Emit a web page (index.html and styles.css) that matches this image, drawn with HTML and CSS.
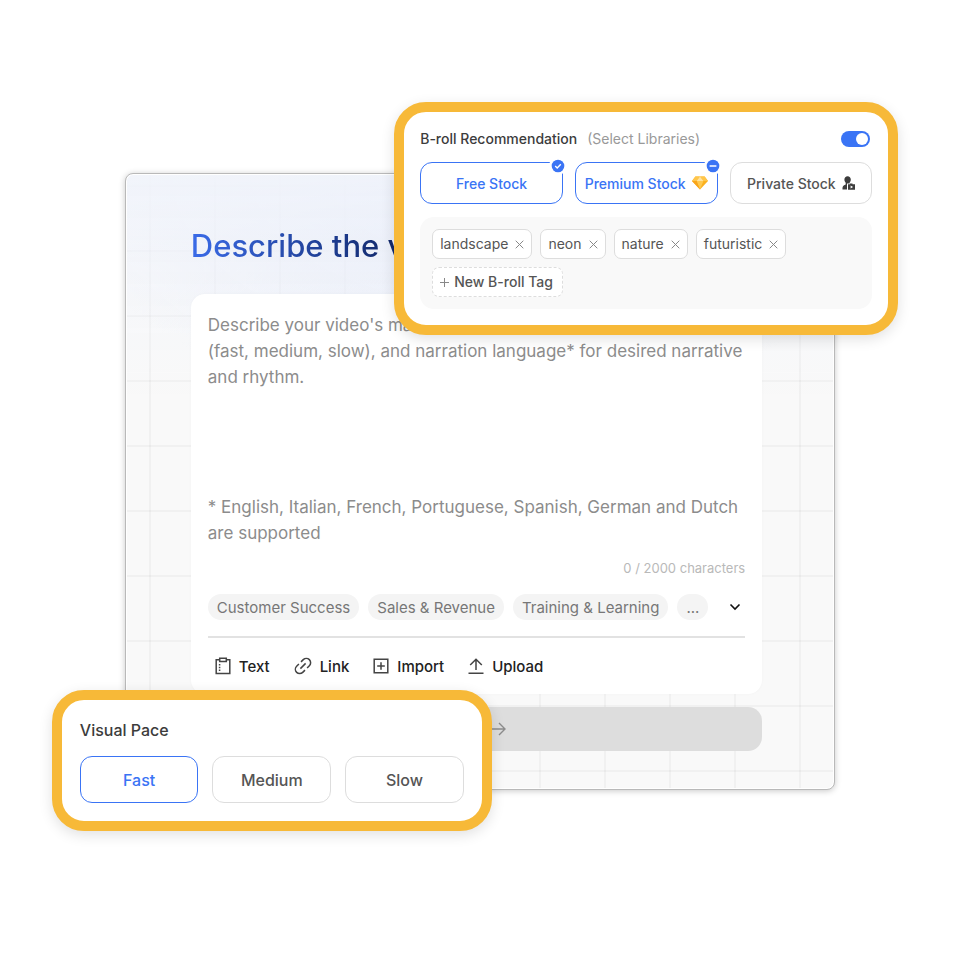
FILE: index.html
```html
<!DOCTYPE html>
<html lang="en">
<head>
  <meta charset="UTF-8">
  <meta name="viewport" content="width=device-width, initial-scale=1.0">
  <title>Describe the video</title>
  <link rel="stylesheet" href="styles.css">
</head>
<body>

  <main class="stage">
    <!-- Main window -->
    <section class="window">
      <h1>Describe the v</h1>

      <div class="editor">
        <textarea class="prompt" rows="9" aria-label="Video description" placeholder="Describe your video's main message, pace&#10;(fast, medium, slow), and narration language* for desired narrative and rhythm.&#10;&#10;&#10;&#10;&#10;* English, Italian, French, Portuguese, Spanish, German and Dutch are supported"></textarea>
        <div class="count">0 / 2000 characters</div>

        <div class="chips">
          <button type="button" class="chip">Customer Success</button>
          <button type="button" class="chip">Sales &amp; Revenue</button>
          <button type="button" class="chip">Training &amp; Learning</button>
          <button type="button" class="chip">...</button>
          <button type="button" class="expand" aria-label="Show more">
            <svg width="12" height="8" viewBox="0 0 12 8" fill="none" stroke="#111" stroke-width="1.6"><path d="M1.5 1.5 6 6l4.5-4.5"/></svg>
          </button>
        </div>

        <div class="sources">
          <button type="button">
            <svg width="16" height="18" viewBox="0 0 16 18" fill="none" stroke="#444" stroke-width="1.5"><path d="M4.5 2.7H1.2v13.8h13.6V2.7h-3.3M4.7 1.2h6.6v3.3H4.7z"/><path d="M4.6 7v7" stroke-dasharray="1.4 1.4"/></svg>
            Text
          </button>
          <button type="button">
            <svg width="18" height="18" viewBox="0 0 18 18" fill="none" stroke="#444" stroke-width="1.5"><path transform="rotate(-45 9 9)" d="M7.5 4.7H4.3a4.3 4.3 0 0 0 0 8.6H7.5M10.5 4.7h3.2a4.3 4.3 0 0 1 0 8.6h-3.2M5.3 9h7.4"/></svg>
            Link
          </button>
          <button type="button">
            <svg width="16" height="16" viewBox="0 0 16 16" fill="none" stroke="#444" stroke-width="1.5"><path d="M1.2 1.2h13.6v13.6H1.2zM8 4.2v7.6M4.2 8h7.6"/></svg>
            Import
          </button>
          <button type="button">
            <svg width="16" height="18" viewBox="0 0 16 18" fill="none" stroke="#444" stroke-width="1.5"><path d="M8 13V2M2.2 8 8 2.2 13.8 8M.5 16.3h15"/></svg>
            Upload
          </button>
        </div>
      </div>

      <button type="button" class="submit">
        Next
        <svg width="14" height="14" viewBox="0 0 14 14" fill="none" stroke="#8c8c8c" stroke-width="1.4"><path d="M0 7h12.8M7 1l6 6-6 6"/></svg>
      </button>
    </section>

    <!-- B-roll card -->
    <section class="card broll">
      <div class="broll-head">
        <h2>B-roll Recommendation</h2>
        <span class="hint">(Select Libraries)</span>
        <input type="checkbox" class="switch" aria-label="B-roll Recommendation" checked>
      </div>

      <div class="libraries">
        <button type="button" class="option selected">
          Free Stock
          <svg class="badge" viewBox="0 0 18 18"><circle cx="9" cy="9" r="9" fill="#fff"/><circle cx="9" cy="9" r="6.3" fill="#3a74f5"/><path d="M6.2 9.1l2 1.9 3.6-3.8" fill="none" stroke="#fff" stroke-width="1.4"/></svg>
        </button>
        <button type="button" class="option selected">
          Premium Stock
          <svg width="16" height="14" viewBox="0 0 16 14"><path d="M3.4.4h9.2L16 5 8 13.6 0 5z" fill="#fbb11f"/><path d="M3.4.4 8 .4 4.6 5H0zM12.6.4 8 .4 11.4 5H16z" fill="#ffc64a"/><path d="M8 .4 4.6 5h6.8z" fill="#ffe3a0"/><path d="M4.6 5h6.8L8 13.6z" fill="#ffc94f"/><path d="M0 5h4.6L8 13.6z" fill="#f9a51a"/></svg>
          <svg class="badge" viewBox="0 0 18 18"><circle cx="9" cy="9" r="9" fill="#fff"/><circle cx="9" cy="9" r="6.3" fill="#3a74f5"/><path d="M5.600 9h6.800" stroke="#fff" stroke-width="1.5"/></svg>
        </button>
        <button type="button" class="option">
          Private Stock
          <svg width="13" height="14" viewBox="0 0 13 14" fill="#3c3c3c"><path d="M5.600.3c1.900 0 3.200 1.400 3.200 3.300 0 1.400-.5 2.400-1.200 3.100v.8H5v6H.5c-.3-2.700.5-4 3.200-5V6.800c-.8-.8-1.300-1.800-1.300-3.200C2.400 1.700 3.700.3 5.600.3z"/><path fill-rule="evenodd" d="M6 8.300h2v-.8h2.500v.8H13v5.400H6zM8.600 9.500v3l2.500-1.500z"/></svg>
        </button>
      </div>

      <div class="tags">
        <span class="tag">landscape <button type="button" aria-label="Remove landscape"><svg width="9" height="9" viewBox="0 0 9 9"><path d="M.7.7l7.600 7.600M8.300.7L.7 8.300"/></svg></button></span>
        <span class="tag">neon <button type="button" aria-label="Remove neon"><svg width="9" height="9" viewBox="0 0 9 9"><path d="M.7.7l7.600 7.600M8.300.7L.7 8.300"/></svg></button></span>
        <span class="tag">nature <button type="button" aria-label="Remove nature"><svg width="9" height="9" viewBox="0 0 9 9"><path d="M.7.7l7.600 7.600M8.300.7L.7 8.300"/></svg></button></span>
        <span class="tag">futuristic <button type="button" aria-label="Remove futuristic"><svg width="9" height="9" viewBox="0 0 9 9"><path d="M.7.7l7.600 7.600M8.300.7L.7 8.300"/></svg></button></span>
        <button type="button" class="tag new-tag"><svg width="9" height="9" viewBox="0 0 9 9"><path d="M4.5 0v9M0 4.5h9"/></svg>New B-roll Tag</button>
      </div>
    </section>

    <!-- Visual pace card -->
    <section class="card pace">
      <h2 id="pace-title">Visual Pace</h2>
      <div class="pace-options" role="radiogroup" aria-labelledby="pace-title">
        <label class="option"><input type="radio" name="pace" checked>Fast</label>
        <label class="option"><input type="radio" name="pace">Medium</label>
        <label class="option"><input type="radio" name="pace">Slow</label>
      </div>
    </section>
  </main>

</body>
</html>
```
FILE: styles.css
```css
* {
  box-sizing: border-box;
}

body {
  margin: 0;
  background: #fff;
  font-family: Inter, "Liberation Sans", sans-serif;
  color: #3c3c3c;
}

button {
  margin: 0;
  padding: 0;
  border: 0;
  background: none;
  font: inherit;
  color: inherit;
  cursor: pointer;
}

h1,
h2 {
  margin: 0;
  font-weight: 500;
}

svg {
  flex: none;
}

.stage {
  position: relative;
  max-width: 1200px;
  margin: 173px 13%;
}

/* Main window */
.window {
  padding: 52px 72px 38px 65px;
  border: 1px solid #b9b9b9;
  border-radius: 8px;
  box-shadow: inset 0 0 0 1px #fff, 0 1px 6px rgba(0, 0, 0, 0.22);
  background:
    linear-gradient(180deg, rgba(241, 244, 251, 0.9), rgba(246, 247, 250, 0) 220px),
    radial-gradient(ellipse 60% 240px at 50% 0, rgba(218, 226, 247, 0.9), rgba(229, 234, 248, 0)),
    repeating-linear-gradient(90deg, rgba(0, 0, 0, 0.03) 0 2px, transparent 2px 65px) 23px 0,
    repeating-linear-gradient(180deg, rgba(0, 0, 0, 0.03) 0 2px, transparent 2px 65px) 0 11px,
    #f9f9f9;
}

h1 {
  height: 68px;
  font-size: 31px;
  line-height: 40px;
  white-space: nowrap;
  background: linear-gradient(90deg, #3a6be8, #12296b 200px);
  -webkit-background-clip: text;
  background-clip: text;
  color: transparent;
}

.editor {
  padding: 18px 17px 14px;
  border-radius: 14px;
  background: #fff;
  box-shadow: 0 0 3px rgba(0, 0, 0, 0.03);
}

.prompt {
  display: block;
  width: 100%;
  padding: 0;
  border: 0;
  outline: 0;
  resize: none;
  overflow: hidden;
  background: none;
  font: 400 17px/26px Inter, "Liberation Sans", sans-serif;
  color: #3c3c3c;
}

.prompt::placeholder {
  color: #8c8c8c;
}

.count {
  margin: 12px 0 16px;
  font-size: 13px;
  line-height: 20px;
  text-align: right;
  color: #b9b9b9;
}

.chips {
  display: flex;
  gap: 9px;
  padding-bottom: 16px;
  border-bottom: 2px solid #e2e2e2;
}

.chip {
  height: 26px;
  padding: 0 9px;
  border-radius: 13px;
  background: #f4f4f4;
  font-size: 15px;
  color: #777;
}

.expand {
  display: flex;
  align-items: center;
  margin-left: auto;
  padding: 0 4px;
}

.sources {
  display: flex;
  gap: 24px;
  padding: 17px 7px 3px;
}

.sources button {
  display: flex;
  align-items: center;
  gap: 8px;
  height: 22px;
  font-size: 15px;
  font-weight: 500;
  color: #222;
}

.submit {
  display: flex;
  align-items: center;
  justify-content: center;
  gap: 10px;
  width: 100%;
  height: 44px;
  margin-top: 13px;
  border-radius: 14px;
  background: #ddd;
  font-size: 16px;
  color: #8c8c8c;
}

/* Floating cards */
.card {
  position: absolute;
  border: 10px solid #f7b938;
  border-radius: 32px;
  background: #fff;
  box-shadow: 0 4px 14px rgba(0, 0, 0, 0.12);
}

.option {
  display: flex;
  align-items: center;
  justify-content: center;
  border: 1px solid #ddd;
  border-radius: 12px;
  color: #555;
}

.option.selected,
.option:has(input:checked) {
  border-color: #3a74f5;
  color: #3a74f5;
}

.broll {
  top: -71px;
  right: -63px;
  width: 504px;
  padding: 16px;
}

.broll-head {
  display: flex;
  align-items: center;
  gap: 10px;
  height: 22px;
  font-size: 14px;
  line-height: 18px;
}

.broll-head h2 {
  font-size: 14px;
}

.hint {
  color: #999;
}

.switch {
  appearance: none;
  width: 29px;
  height: 16px;
  margin: 0 2px 0 auto;
  padding: 2px;
  border-radius: 8px;
  background: #3a74f5;
}

.switch::before {
  content: "";
  display: block;
  width: 12px;
  height: 12px;
  margin-left: auto;
  border-radius: 50%;
  background: #fff;
}

.libraries {
  display: grid;
  grid-template-columns: repeat(3, 1fr);
  gap: 12px;
  margin-top: 12px;
}

.libraries .option {
  position: relative;
  gap: 6px;
  height: 42px;
  font-size: 14px;
  font-weight: 500;
}

.badge {
  position: absolute;
  top: -6px;
  right: -5px;
  width: 18px;
  height: 18px;
}

.tags {
  display: flex;
  flex-wrap: wrap;
  gap: 8px;
  margin-top: 13px;
  padding: 12px;
  border-radius: 14px;
  background: #f9f9f9;
}

.tag {
  display: flex;
  align-items: center;
  gap: 7px;
  height: 30px;
  padding: 0 7px;
  border: 1px solid #ddd;
  border-radius: 7px;
  background: #fff;
  font-size: 14px;
  line-height: 16px;
  color: #555;
}

.tag button {
  display: flex;
}

.tag svg {
  fill: none;
  stroke: #888;
}

.new-tag {
  gap: 5px;
  padding: 0 9px 0 7px;
  border-style: dashed;
  font-weight: 500;
}

.pace {
  bottom: -41px;
  left: -73px;
  width: 440px;
  padding: 18px;
}

.pace h2 {
  font-size: 16px;
  line-height: 24px;
}

.pace-options {
  display: grid;
  grid-template-columns: repeat(3, 1fr);
  gap: 14px;
  margin-top: 14px;
}

.pace-options .option {
  position: relative;
  height: 47px;
  font-size: 16px;
  font-weight: 500;
  cursor: pointer;
}

.pace-options input {
  position: absolute;
  opacity: 0;
}
```
